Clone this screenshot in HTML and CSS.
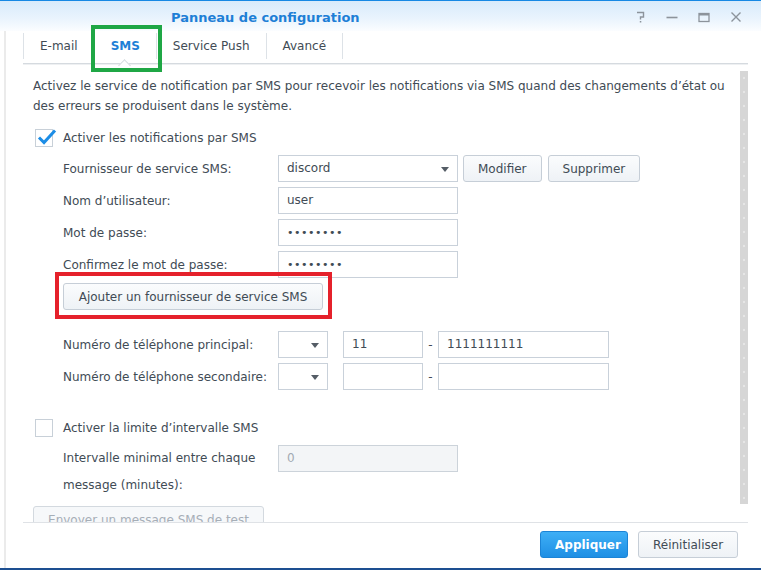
FILE: index.html
```html
<!DOCTYPE html>
<html lang="fr">
<head>
  <meta charset="UTF-8">
  <meta name="viewport" content="width=device-width, initial-scale=1.0">
  <title>Panneau de configuration - SMS</title>
  <link rel="stylesheet" href="styles.css">
</head>
<body>
  <div class="window">
    <div class="titlebar">
      <span class="title">Panneau de configuration</span>
      <div class="win-tools">
        <svg width="10" height="12" viewBox="0 0 10 12"><path d="M1 1.5H7.5V6H4.5V8.5" fill="none" stroke="#8c939b" stroke-width="1.4"/><rect x="3.8" y="10" width="1.5" height="1.5" fill="#8c939b"/></svg>
        <svg width="12" height="12" viewBox="0 0 12 12"><path d="M0.5 6.5H11.5" stroke="#8c939b" stroke-width="1.6"/></svg>
        <svg width="12" height="12" viewBox="0 0 12 12"><rect x="1" y="2.5" width="10" height="8" fill="none" stroke="#8c939b" stroke-width="1.3"/><rect x="1" y="2" width="10" height="2.5" fill="#8c939b"/></svg>
        <svg width="12" height="12" viewBox="0 0 12 12"><path d="M1.5 1.5L10.5 10.5M10.5 1.5L1.5 10.5" stroke="#8c939b" stroke-width="1.4"/></svg>
      </div>
    </div>

    <div class="main">
      <div class="tabs">
        <div class="tab">E-mail</div>
        <div class="tab active">SMS</div>
        <div class="tab">Service Push</div>
        <div class="tab">Avancé</div>
      </div>

      <div class="content">
        <div class="scroll">
          <p class="intro">Activez le service de notification par SMS pour recevoir les notifications via SMS quand des changements d’état ou des erreurs se produisent dans le système.</p>

          <div class="check-row">
            <span class="checkbox checked">
              <svg class="tick" width="20" height="18" viewBox="0 0 20 18"><path d="M2 9.5L7 14.5L18 2.5" fill="none" stroke="#1c8de6" stroke-width="3"/></svg>
            </span>
            <span>Activer les notifications par SMS</span>
          </div>

          <div class="form">
            <div class="row">
              <label>Fournisseur de service SMS:</label>
              <div class="field select">discord<span class="caret"></span></div>
              <button class="btn btn-modify">Modifier</button>
              <button class="btn">Supprimer</button>
            </div>
            <div class="row">
              <label>Nom d’utilisateur:</label>
              <div class="field">user</div>
            </div>
            <div class="row">
              <label>Mot de passe:</label>
              <div class="field dots">••••••••</div>
            </div>
            <div class="row">
              <label>Confirmez le mot de passe:</label>
              <div class="field dots">••••••••</div>
            </div>
            <button class="btn btn-add">Ajouter un fournisseur de service SMS</button>

            <div class="phones">
              <div class="row">
                <label>Numéro de téléphone principal:</label>
                <div class="field code"><span class="caret"></span></div>
                <div class="field prefix">11</div>
                <span class="dash">-</span>
                <div class="field number">1111111111</div>
              </div>
              <div class="row">
                <label>Numéro de téléphone secondaire:</label>
                <div class="field code"><span class="caret"></span></div>
                <div class="field prefix"></div>
                <span class="dash">-</span>
                <div class="field number"></div>
              </div>
            </div>
          </div>

          <div class="check-row check-limit">
            <span class="checkbox"></span>
            <span>Activer la limite d’intervalle SMS</span>
          </div>

          <div class="form">
            <div class="row interval">
              <label>Intervalle minimal entre chaque message (minutes):</label>
              <div class="field disabled">0</div>
            </div>
          </div>

          <button class="btn btn-test">Envoyer un message SMS de test</button>
        </div>
        <div class="scrollbar"></div>
      </div>

      <div class="footer">
        <button class="btn btn-primary">Appliquer</button>
        <button class="btn">Réinitialiser</button>
      </div>
    </div>
    <div class="bottom-bar"></div>

    <div class="mark mark-green"></div>
    <div class="mark mark-red"></div>
  </div>
</body>
</html>
```

FILE: styles.css
```css
body {
  margin: 0;
  font-family: "DejaVu Sans", Verdana, sans-serif;
  font-size: 12px;
  color: #414b55;
  background: #fff;
}

.window {
  position: relative;
  width: 761px;
  height: 570px;
  overflow: hidden;
  background: #fff;
}

.titlebar {
  display: flex;
  align-items: center;
  height: 30px;
  border-top: 1px solid #1688e4;
  background: linear-gradient(#d8ebfb, #eaf4fd 60%, #fbfdff);
}

.title {
  padding-left: 171px;
  padding-top: 2px;
  font-size: 13px;
  font-weight: bold;
  color: #1e7fd6;
}

.win-tools {
  display: flex;
  align-items: center;
  gap: 20px;
  margin-left: auto;
  padding-right: 19px;
  padding-top: 2px;
}

.main {
  display: flex;
  flex-direction: column;
  height: 537px;
  margin-left: 4px;
  border-left: 2px solid #ebebeb;
  padding-left: 17px;
  padding-right: 13px;
}

.tabs {
  display: flex;
  align-items: flex-start;
  height: 33px;
  padding-top: 2px;
  box-sizing: border-box;
  border-bottom: 1px solid #d5dadf;
  box-shadow: 0 1px 0 #eef0f2;
}

.tab {
  position: relative;
  line-height: 26px;
  padding: 0 16px;
  border-left: 1px solid #dde2e7;
}

.tab:last-child {
  border-right: 1px solid #dde2e7;
}

.tab.active {
  font-weight: bold;
  color: #1e7fd6;
}

.tab.active::after {
  content: "";
  position: absolute;
  left: 50%;
  bottom: -11px;
  width: 8px;
  height: 8px;
  margin-left: -5px;
  background: #fff;
  border-top: 1px solid #d5dadf;
  border-left: 1px solid #d5dadf;
  transform: rotate(45deg);
}

.content {
  display: flex;
  height: 458px;
}

.scroll {
  flex: 1;
  overflow: hidden;
  padding: 12px 0 0 10px;
}

.scrollbar {
  width: 8px;
  height: 433px;
  margin-top: 7px;
  background-color: #d6d6d6;
  background-image: radial-gradient(#e6e6e6 0.8px, transparent 1px);
  background-size: 8px 14px;
}

.intro {
  margin: 0;
  width: 705px;
  line-height: 20px;
}

.check-row {
  display: flex;
  align-items: center;
  gap: 10px;
  height: 20px;
  margin-top: 12px;
  padding-left: 2px;
}

.check-limit {
  margin-top: 28px;
}

.checkbox {
  position: relative;
  width: 16px;
  height: 16px;
  border: 1px solid #c8d0d8;
  background: #fff;
}

.tick {
  position: absolute;
  left: 1px;
  top: -2px;
}

.form {
  margin-top: 7px;
  padding-left: 30px;
}

.row {
  display: flex;
  align-items: center;
  height: 27px;
  margin-bottom: 5px;
}

.row label {
  width: 215px;
  flex-shrink: 0;
}

.field {
  position: relative;
  box-sizing: border-box;
  width: 180px;
  height: 27px;
  line-height: 25px;
  padding-left: 8px;
  border: 1px solid #c9d1da;
  background: #fff;
}

.dots {
  font-size: 11px;
  letter-spacing: 0.5px;
}

.caret {
  position: absolute;
  right: 8px;
  top: 11px;
  border-left: 4.5px solid transparent;
  border-right: 4.5px solid transparent;
  border-top: 5px solid #555d66;
}

.btn {
  box-sizing: border-box;
  height: 27px;
  padding: 0 14px;
  font-family: "DejaVu Sans", Verdana, sans-serif;
  font-size: 12px;
  color: #414b55;
  background: linear-gradient(#fbfcfd, #eef2f6);
  border: 1px solid #c6ced7;
  border-radius: 3px;
  cursor: pointer;
}

.btn-modify {
  margin-left: 5px;
  margin-right: 6px;
}

.btn-add {
  width: 260px;
  margin-top: 0;
}

.phones {
  margin-top: 21px;
}

.code {
  width: 50px;
}

.prefix {
  width: 80px;
  margin-left: 15px;
}

.dash {
  width: 15px;
  text-align: center;
}

.number {
  width: 171px;
}

.interval {
  align-items: flex-start;
  height: auto;
}

.interval label {
  line-height: 27px;
}

.field.disabled {
  color: #a2aab3;
  background: #f3f5f7;
  border-color: #ccd3da;
}

.btn-test {
  margin-top: 2px;
  width: 231px;
  color: #a6aeb7;
  background: #f6f8fa;
  border-color: #d3d9df;
}

.footer {
  display: flex;
  justify-content: flex-end;
  gap: 10px;
  height: 45px;
  box-sizing: border-box;
  padding: 8px 10px 0 0;
  border-top: 1px solid #dfe2e6;
}

.btn-primary {
  width: 88px;
  font-weight: bold;
  color: #fff;
  background: linear-gradient(#3eaff6, #1f8fe4);
  border-color: #1c84d6;
}

.footer .btn:last-child {
  width: 100px;
}

.bottom-bar {
  height: 2px;
  background: #1d4f91;
}

.mark {
  position: absolute;
  box-sizing: border-box;
  border: 4px solid;
}

.mark-green {
  left: 91px;
  top: 25px;
  width: 71px;
  height: 47px;
  border-color: #1fa745;
}

.mark-red {
  left: 55px;
  top: 272px;
  width: 277px;
  height: 47px;
  border-color: #e5212b;
}
```
